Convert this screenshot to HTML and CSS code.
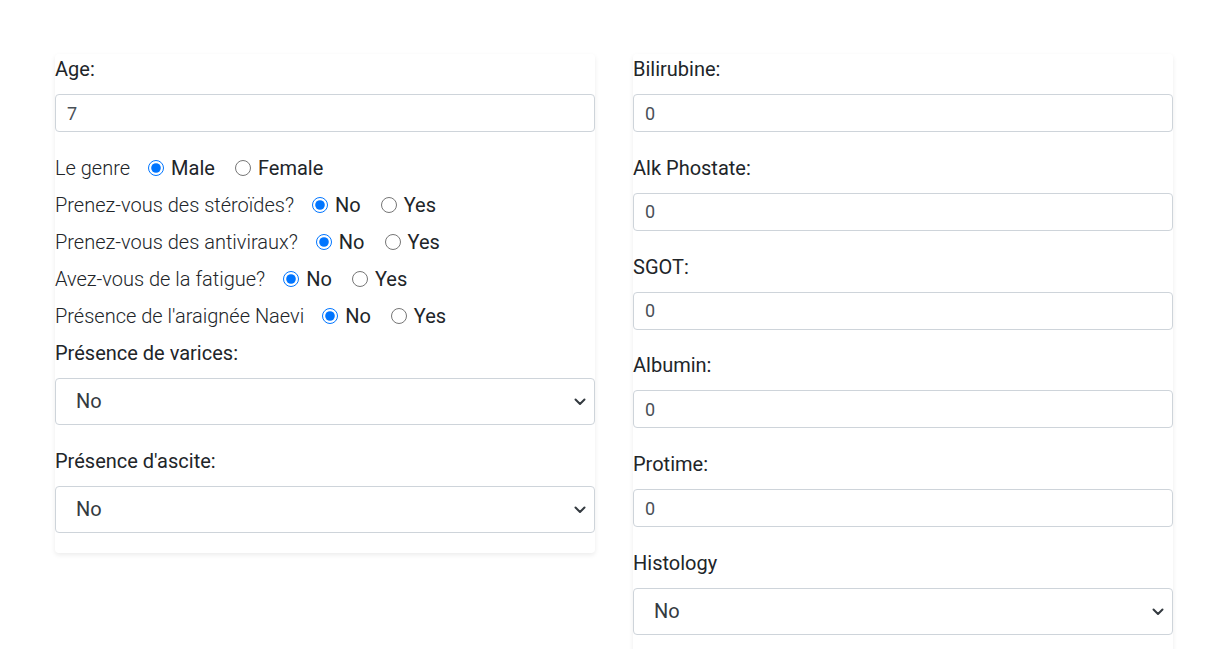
FILE: index.html
```html
<!DOCTYPE html>
<html lang="fr">
<head>
<meta charset="utf-8">
<title>Prédiction</title>
<link rel="stylesheet" href="styles.css">
</head>
<body>
<main class="page">
  <section class="card">
    <div class="group">
      <label class="label">Age:</label>
      <input class="field" type="text" value="7">
    </div>
    <div class="radio-row first">
      <span class="question">Le genre</span>
      <label class="choice"><input type="radio" name="g" checked><span>Male</span></label>
      <label class="choice"><input type="radio" name="g"><span>Female</span></label>
    </div>
    <div class="radio-row">
      <span class="question">Prenez-vous des stéroïdes?</span>
      <label class="choice"><input type="radio" name="s" checked><span>No</span></label>
      <label class="choice"><input type="radio" name="s"><span>Yes</span></label>
    </div>
    <div class="radio-row">
      <span class="question">Prenez-vous des antiviraux?</span>
      <label class="choice"><input type="radio" name="a" checked><span>No</span></label>
      <label class="choice"><input type="radio" name="a"><span>Yes</span></label>
    </div>
    <div class="radio-row">
      <span class="question">Avez-vous de la fatigue?</span>
      <label class="choice"><input type="radio" name="f" checked><span>No</span></label>
      <label class="choice"><input type="radio" name="f"><span>Yes</span></label>
    </div>
    <div class="radio-row">
      <span class="question">Présence de l'araignée Naevi</span>
      <label class="choice"><input type="radio" name="n" checked><span>No</span></label>
      <label class="choice"><input type="radio" name="n"><span>Yes</span></label>
    </div>
    <div class="group">
      <label class="label">Présence de varices:</label>
      <div class="select-wrap">
        <select class="select"><option>No</option><option>Yes</option></select>
        <svg class="chevron" width="12" height="8" viewBox="0 0 12 8"><path d="M1.5 1.5 L6 6 L10.5 1.5" fill="none" stroke="#343a40" stroke-width="2" stroke-linecap="round" stroke-linejoin="round"/></svg>
      </div>
    </div>
    <div class="group last">
      <label class="label">Présence d'ascite:</label>
      <div class="select-wrap">
        <select class="select"><option>No</option><option>Yes</option></select>
        <svg class="chevron" width="12" height="8" viewBox="0 0 12 8"><path d="M1.5 1.5 L6 6 L10.5 1.5" fill="none" stroke="#343a40" stroke-width="2" stroke-linecap="round" stroke-linejoin="round"/></svg>
      </div>
    </div>
  </section>

  <section class="card">
    <div class="group">
      <label class="label">Bilirubine:</label>
      <input class="field" type="text" value="0">
    </div>
    <div class="group">
      <label class="label">Alk Phostate:</label>
      <input class="field" type="text" value="0">
    </div>
    <div class="group">
      <label class="label">SGOT:</label>
      <input class="field" type="text" value="0">
    </div>
    <div class="group">
      <label class="label">Albumin:</label>
      <input class="field" type="text" value="0">
    </div>
    <div class="group">
      <label class="label">Protime:</label>
      <input class="field" type="text" value="0">
    </div>
    <div class="group">
      <label class="label">Histology</label>
      <div class="select-wrap">
        <select class="select"><option>No</option><option>Yes</option></select>
        <svg class="chevron" width="12" height="8" viewBox="0 0 12 8"><path d="M1.5 1.5 L6 6 L10.5 1.5" fill="none" stroke="#343a40" stroke-width="2" stroke-linecap="round" stroke-linejoin="round"/></svg>
      </div>
    </div>
  </section>
</main>
</body>
</html>
```

FILE: styles.css
```css
* { box-sizing: border-box; }

html, body {
  margin: 0;
  padding: 0;
  background: #fff;
}

body {
  font-family: Roboto, "Liberation Sans", Arial, sans-serif;
  color: #212529;
  font-size: 20px;
}

.page {
  display: flex;
  align-items: flex-start;
  gap: 38px;
  padding: 54px 0 0 55px;
}

.card {
  width: 540px;
  background: #fff;
  box-shadow: 0 2px 5px rgba(0, 0, 0, 0.08);
  border-radius: 4px;
  padding-bottom: 20px;
}

.group {
  margin-bottom: 20.8px;
}

.group.last {
  margin-bottom: 0;
}

.label {
  display: block;
  font-size: 20px;
  line-height: 30px;
  margin-bottom: 10px;
  color: #212529;
}

.field {
  display: block;
  width: 100%;
  height: 38px;
  padding: 5px 11px;
  font-family: inherit;
  font-size: 18px;
  line-height: 26px;
  color: #495057;
  background: #fff;
  border: 1px solid #ced4da;
  border-radius: 4px;
  outline: none;
}

.radio-row {
  display: flex;
  align-items: center;
  height: 30px;
  margin-bottom: 7px;
  font-size: 20px;
  line-height: 30px;
}

.group + .radio-row {
  margin-top: 0.2px;
}

.question {
  font-weight: 300;
  color: #212529;
}

.choice {
  display: inline-flex;
  align-items: center;
  margin-left: 20px;
  color: #212529;
}

.question + .choice {
  margin-left: 18px;
}

.choice input {
  width: 16px;
  height: 16px;
  margin: 0 7px 0 0;
}

.select-wrap {
  position: relative;
}

.select {
  display: block;
  width: 100%;
  height: 47px;
  padding: 7px 40px 7px 20px;
  font-family: inherit;
  font-size: 20px;
  line-height: 31px;
  color: #343a40;
  background: #fff;
  border: 1px solid #ced4da;
  border-radius: 4px;
  appearance: none;
  -webkit-appearance: none;
  outline: none;
}

.chevron {
  position: absolute;
  right: 9px;
  top: 20px;
  pointer-events: none;
}
```
